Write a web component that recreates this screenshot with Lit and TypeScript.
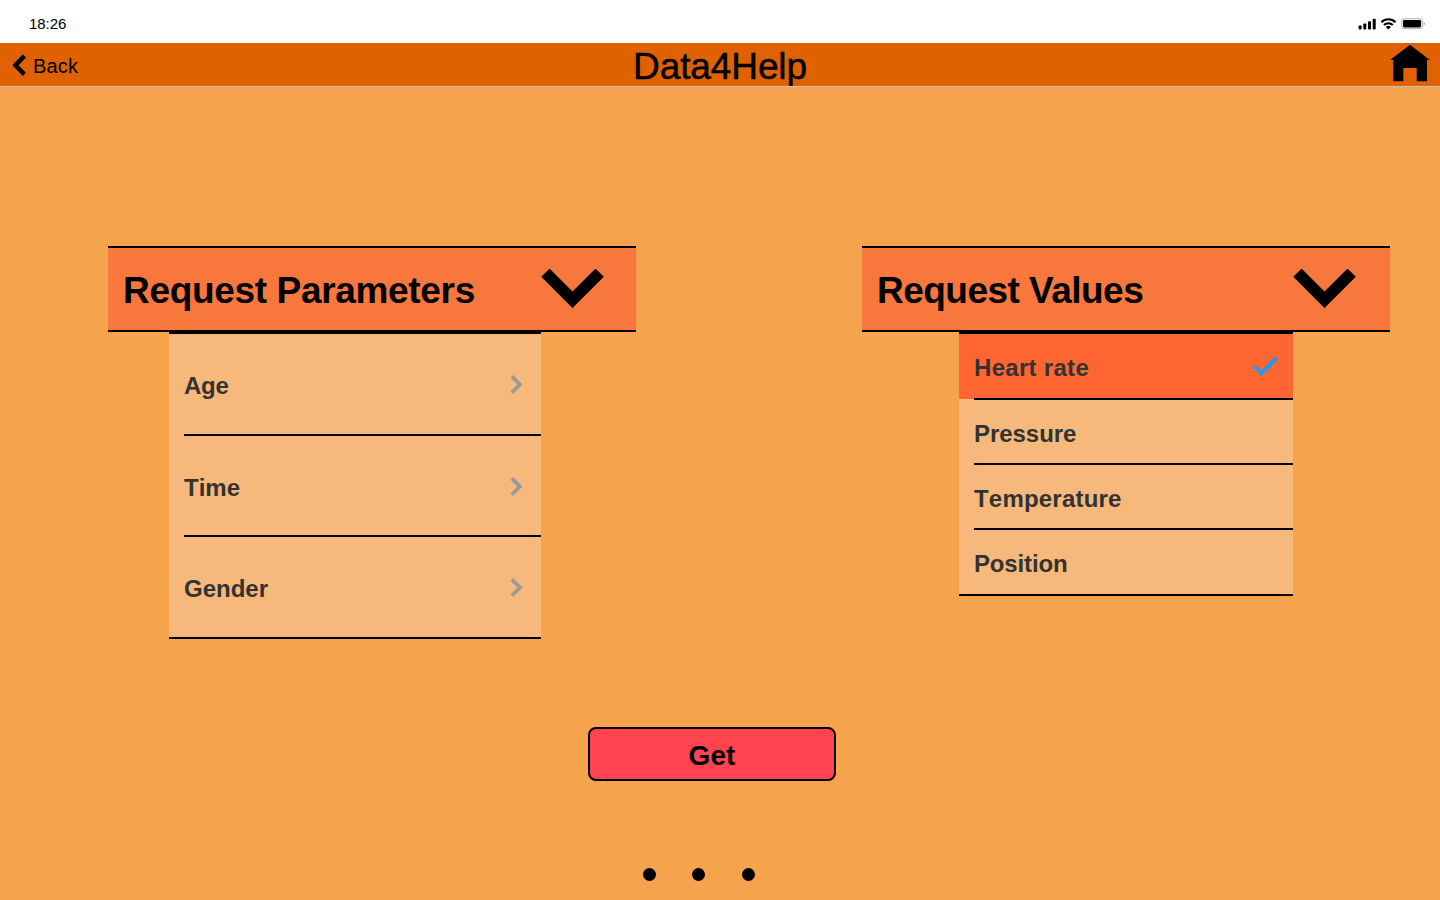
import { LitElement, html, css, nothing } from "lit";
import { customElement, property } from "lit/decorators.js";
import { styleMap } from "lit/directives/style-map.js";

@customElement("status-bar")
class StatusBar extends LitElement {
  static styles = css`
    :host {
      display: flex;
      justify-content: space-between;
      align-items: center;
      height: 43px;
      padding: 4px 14px 0 29px;
      box-sizing: border-box;
      background: #fff;
    }
    .time { font-size: 15px; line-height: 18px; letter-spacing: -0.05px; }
    .icons { display: block; width: 68px; height: 14px; }
  `;
  render() {
    return html`
      <span class="time">18:26</span>
      <svg class="icons" viewBox="1358 17 68 14">
        <rect x="1358.6" y="25.4" width="3" height="4" rx=".8" />
        <rect x="1363.3" y="23.4" width="3" height="6" rx=".8" />
        <rect x="1368" y="21.2" width="3" height="8.2" rx=".8" />
        <rect x="1372.7" y="18.8" width="3" height="10.6" rx=".8" />
        <g fill="none" stroke="#000" stroke-width="2.1">
          <path d="M1381.3 22.2a10 10 0 0 1 14.2 0" />
          <path d="M1384 25.1a6.2 6.2 0 0 1 8.8 0" />
        </g>
        <path d="M1385.9 26.9a3.6 3.6 0 0 1 5 0l-2.5 2.6z" />
        <rect x="1401.7" y="18.7" width="20.8" height="10" rx="2.6" fill="none" stroke="#a6a6a6" stroke-width=".9" />
        <rect x="1403" y="20" width="18.1" height="7.4" rx="1.3" />
        <path d="M1423.7 22.2q1.2 .4 1.2 1.6t-1.2 1.6z" fill="#a6a6a6" />
      </svg>
    `;
  }
}

@customElement("nav-bar")
class NavBar extends LitElement {
  static styles = css`
    :host {
      display: grid;
      grid-template-columns: 1fr auto 1fr;
      height: 44px;
      box-sizing: border-box;
      padding: 0 10px 0 12px;
      background: #df6100;
      border-bottom: 1px solid #c4c4c4;
      overflow: hidden;
    }
    .back { display: flex; align-items: flex-start; gap: 6px; padding-top: 11px; height: 32px; }
    .chevron { display: block; width: 15px; height: 23px; }
    .label { font-size: 20px; line-height: 24px; letter-spacing: 0.2px; }
    .title {
      margin: 0 2px 0 0;
      font-weight: 400;
      font-size: 37px;
      line-height: 47px;
      letter-spacing: -0.1px;
      white-space: nowrap;
      -webkit-text-stroke: 0.5px #000;
    }
    .home { display: block; justify-self: end; width: 40px; height: 38px; margin-top: 1px; }
  `;
  render() {
    return html`
      <div class="back">
        <svg class="chevron" viewBox="12 54 15 23">
          <path d="M12.3 65.2 22.8 54.3 26 57.5 18.6 65.2 26 72.7 22.8 76z" />
        </svg>
        <span class="label">Back</span>
      </div>
      <h1 class="title">Data4Help</h1>
      <svg class="home" viewBox="1390 44 40 38">
        <path d="M1410 44.8 1429.8 59.9H1427V81.2H1416.7V68H1403.3V81.2H1393.3V59.9H1390.2z" />
      </svg>
    `;
  }
}

interface Item {
  label: string;
  track: number;
  selected?: boolean;
}

@customElement("drop-panel")
class DropPanel extends LitElement {
  @property() heading = "";
  @property() mark = "chevron";
  @property({ attribute: false }) items: Item[] = [];

  static styles = css`
    :host { display: block; width: 528px; }
    .head {
      display: flex;
      justify-content: space-between;
      align-items: center;
      height: 86px;
      box-sizing: border-box;
      border: solid #000;
      border-width: 2px 0;
      padding: 0 32px 0 15px;
      background: #f8773d;
    }
    .heading { margin: 0; font-size: 37px; line-height: 44px; font-weight: 700; padding-top: 4px; letter-spacing: -0.33px; white-space: nowrap; }
    .values .heading { letter-spacing: -0.52px; }
    .arrow { display: block; width: 63px; height: 40px; }
    .values .head { padding-right: 34px; }
    .list {
      margin: 0 95px 0 61px;
      padding: 0;
      list-style: none;
      background: #f7b97b;
      border: solid #000;
      border-width: 2px 0;
    }
    .values .list { margin: 0 97px; }
    .row { padding-left: 15px; }
    .cell {
      display: flex;
      justify-content: space-between;
      align-items: center;
      height: 99px;
      padding-right: 18px;
      border-bottom: 2px solid #000;
    }
    .values .cell { height: 63px; padding-right: 15px; }
    .row:first-child .cell { height: 100px; }
    .values .row:first-child .cell { height: 64px; }
    .row:last-child .cell { height: 100px; border-bottom: 0; }
    .values .row:last-child .cell { height: 64px; }
    .selected { background: linear-gradient(#ff6632, #ff6632) no-repeat 0 0 / 100% 65px; }
    .label { font-size: 24px; line-height: 28px; font-weight: 700; color: #333; padding-top: 5px; font-kerning: none; }
    .row:first-child .label, .row:last-child .label { padding-top: 3px; }
    .more { display: block; width: 13px; height: 20px; margin-top: 3px; fill: #999; }
    .row:first-child .more, .row:last-child .more { margin-top: 2px; }
    .check { display: block; width: 25px; height: 20px; fill: #1f9af5; }
  `;

  private trail(item: Item) {
    if (this.mark === "chevron") {
      return html`<svg class="more" viewBox="0 0 13 20"><path d="M.5 2.7 3.2 0 12.6 9.5 3.2 19 .5 16.4 7.3 9.5z" /></svg>`;
    }
    return item.selected
      ? html`<svg class="check" viewBox="1253 356 25 20"><path d="M1253.3 367.6 1256 365 1261.3 370.4 1275.1 356.8 1278 359.6 1261.4 376z" /></svg>`
      : nothing;
  }

  render() {
    return html`
      <section class=${this.mark === "chevron" ? "params" : "values"}>
        <div class="head">
          <h2 class="heading">${this.heading}</h2>
          <svg class="arrow" viewBox="541 269 63 40">
            <path d="M541.3 276.8 549.6 268.6 572.5 291.4 595.5 268.6 603.8 276.8 572.5 308z" />
          </svg>
        </div>
        <ul class="list">
          ${this.items.map(
            (item) => html`<li class=${item.selected ? "row selected" : "row"}>
              <div class="cell"><span class="label" style=${styleMap({ letterSpacing: `${item.track}px` })}>${item.label}</span>${this.trail(item)}</div>
            </li>`
          )}
        </ul>
      </section>
    `;
  }
}

@customElement("app-root")
class AppRoot extends LitElement {
  static styles = css`
    :host {
      display: flex;
      flex-direction: column;
      width: 1440px;
      height: 900px;
      overflow: hidden;
      background: #f5a44d;
      color: #000;
      font-family: "Liberation Sans", Arial, sans-serif;
    }
    .panels {
      display: flex;
      justify-content: space-between;
      align-items: flex-start;
      height: 640px;
      box-sizing: border-box;
      padding: 159px 50px 0 108px;
    }
    .actions { display: flex; flex-direction: column; align-items: center; padding-right: 16px; }
    .get {
      width: 248px;
      height: 54px;
      box-sizing: border-box;
      padding: 4px 0 0;
      border: 2px solid #000;
      border-radius: 8px;
      background: #ff4450;
      color: #000;
      font: 700 28px/32px "Liberation Sans", Arial, sans-serif;
      letter-spacing: 0.1px;
    }
    .dots { display: flex; gap: 36px; width: 112px; margin: 87px 26px 0 0; }
    .dot { width: 13px; height: 13px; border-radius: 50%; background: #000; }
    .dot:last-child { margin-left: 1px; }
  `;
  render() {
    return html`
      <status-bar></status-bar>
      <nav-bar></nav-bar>
      <main class="panels">
        <drop-panel
          heading="Request Parameters"
          .items=${[{ label: "Age", track: -0.3 }, { label: "Time", track: 0 }, { label: "Gender", track: 0 }]}
        ></drop-panel>
        <drop-panel
          heading="Request Values"
          mark="check"
          .items=${[
            { label: "Heart rate", track: 0.3, selected: true },
            { label: "Pressure", track: -0.05 },
            { label: "Temperature", track: 0.2 },
            { label: "Position", track: -0.15 },
          ]}
        ></drop-panel>
      </main>
      <div class="actions">
        <button class="get">Get</button>
        <div class="dots"><i class="dot"></i><i class="dot"></i><i class="dot"></i></div>
      </div>
    `;
  }
}
